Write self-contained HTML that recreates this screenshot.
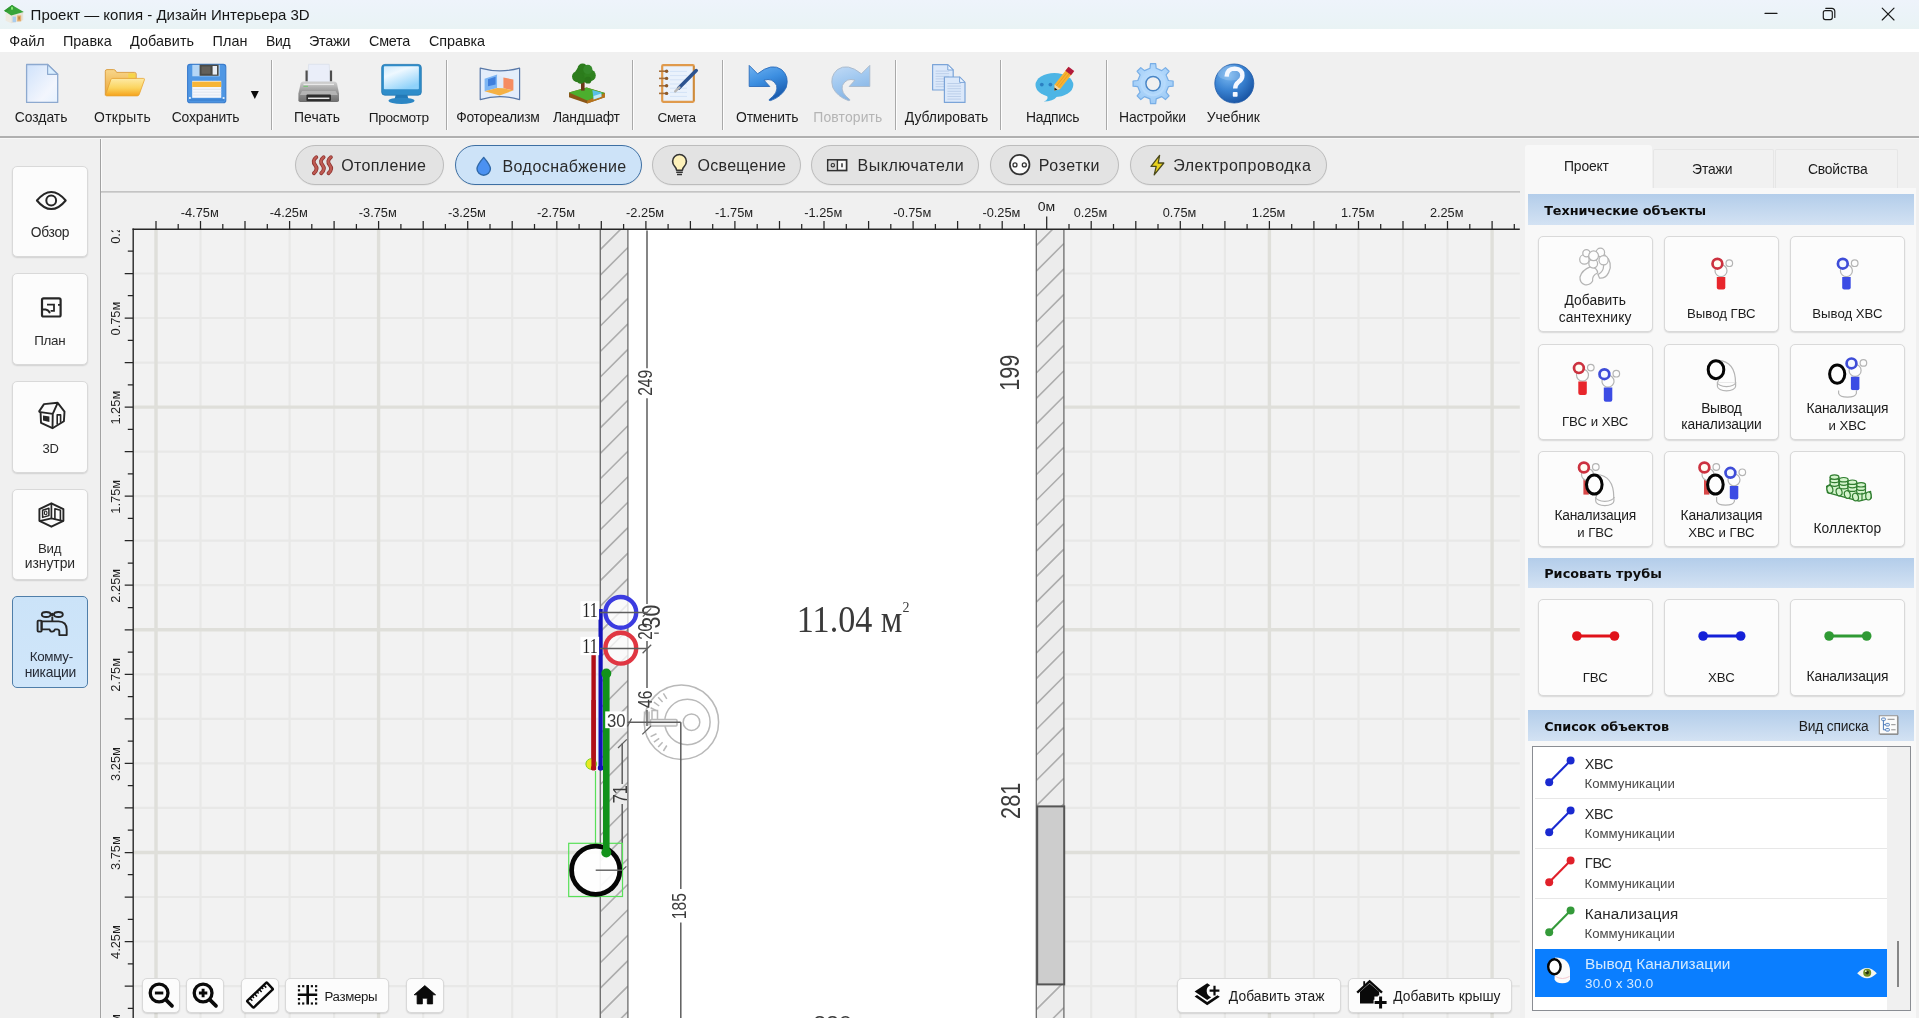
<!DOCTYPE html>
<html lang="ru"><head><meta charset="utf-8"><title>Проект — копия - Дизайн Интерьера 3D</title>
<style>
html,body{margin:0;padding:0;background:#f0f0f0;}
body{width:1919px;height:1018px;overflow:hidden;background:#f0f0f0;font-family:"Liberation Sans",sans-serif;position:relative;}
div,span.t,svg{position:absolute;box-sizing:border-box;}
span.t{white-space:nowrap;line-height:1;}
.btn{background:#fcfcfc;border:1px solid #d9d9d9;border-radius:5px;box-shadow:0 1px 1.5px rgba(0,0,0,0.13);}
.pill{background:#e3e3e3;border:1.7px solid #bcbcbc;border-radius:21px;box-shadow:0 0.5px 1px rgba(0,0,0,0.08);}
.pill.on{background:#cde3f8;border:1.7px solid #3d6fa3;}
.sep{width:2px;background:linear-gradient(90deg,#a9a9a9 0 1px,#fdfdfd 1px 2px);}
.hdr{background:linear-gradient(#b3cdea,#d3e2f3);}

#w{left:0;top:0;width:1919px;height:1018px;will-change:transform;}

</style></head>
<body>
<div id="w">
<div style="left:0px;top:0px;width:1919px;height:29px;background:linear-gradient(180deg,#eef3fb 0%,#ebf3f8 55%,#e9f3f4 100%);"></div>
<svg style="left:0;top:0" width="30" height="29" viewBox="0 0 30 29">
<polygon points="5.6,12.6 11.2,15.2 11.2,23.2 5.6,20.8" fill="#eeeae0"/>
<polygon points="11.2,15.2 23.2,12.2 23.2,20.2 11.2,23.2" fill="#e7e2d6"/>
<rect x="12.6" y="16.6" width="3.4" height="5.6" fill="#a9cdee"/>
<rect x="17.2" y="15.4" width="4" height="6" fill="#e5ac6a"/>
<rect x="18.4" y="16.6" width="1.4" height="3" fill="#b8803c"/>
<polygon points="4.1,10.7 12,5.1 23.8,12 11.2,15.6" fill="#38a43a"/>
<polygon points="4.1,10.7 12,5.1 14,6.4 6,12" fill="#2f9832"/>
<ellipse cx="12" cy="8.3" rx="1" ry="1.7" fill="#86ea72"/>
</svg>
<span class="t" style="left:30.60px;top:6.80px;font-size:15px;letter-spacing:0.003px;color:#151515;">Проект — копия - Дизайн Интерьера 3D</span>
<svg style="left:1750px;top:0" width="169" height="29" viewBox="0 0 169 29">
<g stroke="#1a1a1a" stroke-width="1.15" fill="none" stroke-linecap="round">
<line x1="15" y1="13.4" x2="27" y2="13.4"/>
<rect x="73.3" y="10.6" width="9" height="9" rx="2"/>
<path d="M75.8 8.4 h6.2 a2.8 2.8 0 0 1 2.8 2.8 v6.2"/>
<line x1="132.2" y1="8.2" x2="144" y2="20"/><line x1="144" y1="8.2" x2="132.2" y2="20"/>
</g></svg>
<div style="left:0px;top:29px;width:1919px;height:22.5px;background:#fff;"></div>
<span class="t" style="left:9.20px;top:34.21px;font-size:14.4px;letter-spacing:0.024px;color:#1a1a1a;">Файл</span>
<span class="t" style="left:63.00px;top:34.21px;font-size:14.4px;letter-spacing:0.010px;color:#1a1a1a;">Правка</span>
<span class="t" style="left:130.00px;top:34.21px;font-size:14.4px;letter-spacing:0.070px;color:#1a1a1a;">Добавить</span>
<span class="t" style="left:212.50px;top:34.21px;font-size:14.4px;letter-spacing:0.071px;color:#1a1a1a;">План</span>
<span class="t" style="left:266.00px;top:34.61px;font-size:13.93px;letter-spacing:-0.300px;color:#1a1a1a;">Вид</span>
<span class="t" style="left:309.00px;top:34.21px;font-size:14.4px;letter-spacing:-0.294px;color:#1a1a1a;">Этажи</span>
<span class="t" style="left:369.00px;top:34.21px;font-size:14.4px;letter-spacing:-0.255px;color:#1a1a1a;">Смета</span>
<span class="t" style="left:429.00px;top:34.21px;font-size:14.4px;letter-spacing:-0.070px;color:#1a1a1a;">Справка</span>
<div style="left:0px;top:51.5px;width:1919px;height:85px;background:#f0f0f0;"></div>
<div style="left:0px;top:136px;width:1919px;height:1.6px;background:#b0b0b0;"></div>
<div style="left:0px;top:137.6px;width:1919px;height:1.0px;background:#f8f8f8;"></div>
<div class="sep" style="left:271.2px;top:60px;width:2px;height:70px;"></div>
<div class="sep" style="left:445.5px;top:60px;width:2px;height:70px;"></div>
<div class="sep" style="left:632.2px;top:60px;width:2px;height:70px;"></div>
<div class="sep" style="left:722.2px;top:60px;width:2px;height:70px;"></div>
<div class="sep" style="left:894.5px;top:60px;width:2px;height:70px;"></div>
<div class="sep" style="left:999.5px;top:60px;width:2px;height:70px;"></div>
<div class="sep" style="left:1106.2px;top:60px;width:2px;height:70px;"></div>
<span class="t" style="left:14.70px;top:111.13px;font-size:13.9px;letter-spacing:-0.004px;color:#1c1c1c;">Создать</span>
<span class="t" style="left:94.00px;top:111.13px;font-size:13.9px;letter-spacing:0.344px;color:#1c1c1c;">Открыть</span>
<span class="t" style="left:171.70px;top:111.13px;font-size:13.9px;letter-spacing:-0.142px;color:#1c1c1c;">Сохранить</span>
<span class="t" style="left:294.00px;top:111.13px;font-size:13.9px;letter-spacing:0.077px;color:#1c1c1c;">Печать</span>
<span class="t" style="left:368.70px;top:111.31px;font-size:13.69px;letter-spacing:-0.303px;color:#1c1c1c;">Просмотр</span>
<span class="t" style="left:456.30px;top:111.19px;font-size:13.83px;letter-spacing:-0.299px;color:#1c1c1c;">Фотореализм</span>
<span class="t" style="left:553.00px;top:111.13px;font-size:13.9px;letter-spacing:-0.290px;color:#1c1c1c;">Ландшафт</span>
<span class="t" style="left:657.50px;top:111.42px;font-size:13.56px;letter-spacing:-0.301px;color:#1c1c1c;">Смета</span>
<span class="t" style="left:736.00px;top:111.13px;font-size:13.9px;letter-spacing:-0.152px;color:#1c1c1c;">Отменить</span>
<span class="t" style="left:813.30px;top:111.13px;font-size:13.9px;letter-spacing:0.150px;color:#b4b4b4;">Повторить</span>
<span class="t" style="left:904.70px;top:111.13px;font-size:13.9px;letter-spacing:-0.015px;color:#1c1c1c;">Дублировать</span>
<span class="t" style="left:1026.00px;top:111.15px;font-size:13.88px;letter-spacing:-0.298px;color:#1c1c1c;">Надпись</span>
<span class="t" style="left:1119.00px;top:111.13px;font-size:13.9px;letter-spacing:-0.129px;color:#1c1c1c;">Настройки</span>
<span class="t" style="left:1206.70px;top:111.13px;font-size:13.9px;letter-spacing:0.024px;color:#1c1c1c;">Учебник</span>
<svg style="left:250px;top:90px" width="10" height="10"><polygon points="0.8,1 8.8,1 4.8,9" fill="#0a0a0a"/></svg>
<svg style="left:0;top:0" width="1919" height="140" viewBox="0 0 1919 140"><defs>
<linearGradient id="gdoc" x1="0" y1="0" x2="1" y2="1"><stop offset="0" stop-color="#cfe2fb"/><stop offset="0.7" stop-color="#f3f6fd"/><stop offset="1" stop-color="#e6f2ff"/></linearGradient>
<linearGradient id="gfold" x1="0" y1="0" x2="0" y2="1"><stop offset="0" stop-color="#fdeaa6"/><stop offset="0.55" stop-color="#fbd45e"/><stop offset="1" stop-color="#f5a21c"/></linearGradient>
<linearGradient id="gfoldb" x1="0" y1="0" x2="0" y2="1"><stop offset="0" stop-color="#f8d68a"/><stop offset="1" stop-color="#eba534"/></linearGradient>
<linearGradient id="gprn" x1="0" y1="0" x2="0" y2="1"><stop offset="0" stop-color="#d2d2d2"/><stop offset="0.45" stop-color="#9c9c9c"/><stop offset="1" stop-color="#6e6e6e"/></linearGradient>
<linearGradient id="gscr" x1="0" y1="0" x2="0.6" y2="1"><stop offset="0" stop-color="#cfeafc"/><stop offset="0.35" stop-color="#eef8ff"/><stop offset="1" stop-color="#8fd2fa"/></linearGradient>
<linearGradient id="gundo" x1="0" y1="0" x2="0.4" y2="1"><stop offset="0" stop-color="#6fb3f2"/><stop offset="0.5" stop-color="#3c8ee0"/><stop offset="1" stop-color="#1a5db0"/></linearGradient>
<linearGradient id="gredo" x1="1" y1="0" x2="0.6" y2="1"><stop offset="0" stop-color="#c4dcf6"/><stop offset="0.5" stop-color="#a2c9f0"/><stop offset="1" stop-color="#86b4e4"/></linearGradient>
<radialGradient id="ghelp" cx="0.35" cy="0.28" r="0.8"><stop offset="0" stop-color="#7ab8f0"/><stop offset="0.5" stop-color="#3a83d2"/><stop offset="1" stop-color="#154f9e"/></radialGradient>
<radialGradient id="ggear" cx="0.5" cy="0.4" r="0.6"><stop offset="0" stop-color="#c2e2ff"/><stop offset="1" stop-color="#9ccaf6"/></radialGradient>
</defs><path d="M26.6 64.5H47.6L57.7 74.3V102.4H26.6Z" fill="url(#gdoc)" stroke="#8da9cf" stroke-width="1.3" stroke-linejoin="round"/><path d="M47.6 64.5V74.3H57.7Z" fill="#d9eeff" stroke="#8da9cf" stroke-width="1.2" stroke-linejoin="round"/><path d="M105.3 95.2V71.2Q105.3 69.6 107 69.6H113.6Q115 69.6 115.8 71L116.6 72.4H134.5Q136.2 72.4 136.2 74V78.6H112L105.3 95.2Z" fill="url(#gfoldb)" stroke="#d99a3a" stroke-width="0.9"/><rect x="128.3" y="73.4" width="7" height="4.6" fill="#f6d54a"/><path d="M112.6 78.4H143.4Q144.9 78.4 144.4 79.9L139.2 94.6Q138.7 95.9 137.2 95.9H106.6Q105.3 95.9 105.8 94.5L110.8 79.7Q111.3 78.4 112.6 78.4Z" fill="url(#gfold)" stroke="#e8a532" stroke-width="0.8"/><rect x="187.6" y="64.4" width="38.2" height="38.4" rx="2.6" fill="#4f97e4" stroke="#3a7ccc" stroke-width="1.1"/><rect x="192.3" y="64.9" width="27.4" height="11.4" fill="#b4d6f6"/><rect x="199.6" y="64.6" width="19" height="11.2" fill="#4a4a46"/><rect x="212.6" y="66" width="4.4" height="8.6" fill="#e9eef5"/><rect x="201.5" y="66.4" width="9" height="7.4" fill="#63605a"/><rect x="192.2" y="80.8" width="29" height="17" fill="#f4f6fb"/><rect x="192.2" y="81.6" width="29" height="5.4" fill="#f7b537"/><path d="M192.2 89.4H221.2M192.2 92.2H221.2M192.2 95H221.2" stroke="#dfe4ee" stroke-width="0.9"/><rect x="189.2" y="98.6" width="35" height="2.6" fill="#3f86d6"/><circle cx="189.9" cy="98" r="1.1" fill="#e4f0fc"/><circle cx="223.6" cy="98" r="1.1" fill="#e4f0fc"/><path d="M308.6 64.3H329.2L330.2 82H307.6Z" fill="#eaeef9" stroke="#d5dbe8" stroke-width="0.6"/><path d="M306.6 70.5V81.6M331 70.5V81.6" stroke="#4e4e4e" stroke-width="2.2"/><path d="M303.2 81.6H334.4Q336.4 81.6 337 83.6L339 93.6V100.2Q339 102 337.2 102H300.2Q298.4 102 298.4 100.2V93.6L300.6 83.6Q301.2 81.6 303.2 81.6Z" fill="url(#gprn)"/><path d="M303.5 84.4H334" stroke="#e8e8e8" stroke-width="1.3"/><path d="M303.4 86.4H308" stroke="#7cc47a" stroke-width="1.2"/><path d="M302 91H335.6L337.6 95H300Z" fill="#b4b4b4"/><rect x="306.4" y="94.6" width="24.6" height="6.4" rx="1" fill="#2e2e2e"/><path d="M308 98.3H329.4" stroke="#e8e8e8" stroke-width="1.5"/><rect x="381.7" y="64.4" width="39.6" height="30.8" rx="3.2" fill="#2f8dca" stroke="#2478b2" stroke-width="0.8"/><rect x="383.9" y="66.3" width="35" height="23" rx="0.8" fill="url(#gscr)"/><path d="M395.6 95H407.4L408.6 100H394.4Z" fill="#2379b6"/><ellipse cx="401.5" cy="100.8" rx="13" ry="3.1" fill="#2b86c4"/><path d="M480.2 68.2Q500 73.6 519.6 68.2V99.6Q500 93.8 480.2 99.6Z" fill="#e4eefb" stroke="#5878a8" stroke-width="1.2" stroke-linejoin="round"/><path d="M484.6 78.8L497.2 74.6V88L484.6 91.2Z" fill="#7db6f4"/><path d="M488 79.2L495.6 76.8V84.6L488 86.2Z" fill="#3f7fdc"/><path d="M497.2 74.6L503.4 77.4V88.2L497.2 88Z" fill="#dfeaf8"/><path d="M503.4 77.4L513.4 79.6V90.4L503.4 88.2Z" fill="#f58c62"/><path d="M484.6 91.2L497.2 88L503.4 88.2L513.4 90.4L499.6 95.4Z" fill="#f5b144"/><path d="M569 92.6L586.6 87.4L605 93L605 97.2L587.2 103.6L569 97.2Z" fill="#8a5618"/><path d="M587.2 100.4L605 93V97.2L587.2 103.6Z" fill="#b8741c"/><path d="M569 92.6L586.6 87.4L605 93L587.2 100.4Z" fill="#4cae2e"/><path d="M592.4 90L601.4 92.4V96.8L593.6 99.6Z" fill="#58c0e8"/><path d="M593.6 96L601.4 93.4V96.8L593.6 99.6Z" fill="#bfe8f6"/><rect x="581" y="80" width="3.6" height="10.6" fill="#6a3818"/><circle cx="583.6" cy="74" r="8.4" fill="#2c7c1c"/><circle cx="577.6" cy="76.6" r="5.6" fill="#2c7c1c"/><circle cx="590" cy="75.4" r="5.8" fill="#2f821f"/><circle cx="582.6" cy="68.6" r="5" fill="#2c7c1c"/><circle cx="587.8" cy="69.4" r="4.6" fill="#35892a"/><circle cx="580.6" cy="80.6" r="3.2" fill="#2c7c1c"/><circle cx="588" cy="80.2" r="3.4" fill="#2a761a"/><rect x="662.2" y="65.2" width="31.6" height="36.6" rx="1" fill="#eaf2fc" stroke="#e09a4c" stroke-width="2.2"/><path d="M693.8 66V101" stroke="#c98a3c" stroke-width="1.4"/><path d="M670 71.4H687M670 75.6H687M670 79.8H687M670 84H687M670 88.2H687M670 92.4H687M670 96.4H687" stroke="#d3e2f6" stroke-width="1"/><path d="M659 71.2H666" stroke="#a8703a" stroke-width="1.6"/><circle cx="666.6" cy="71.2" r="1.7" fill="#8e5a2a"/><path d="M659 78.4H666" stroke="#a8703a" stroke-width="1.6"/><circle cx="666.6" cy="78.4" r="1.7" fill="#8e5a2a"/><path d="M659 85.8H666" stroke="#a8703a" stroke-width="1.6"/><circle cx="666.6" cy="85.8" r="1.7" fill="#8e5a2a"/><path d="M659 93.4H666" stroke="#a8703a" stroke-width="1.6"/><circle cx="666.6" cy="93.4" r="1.7" fill="#8e5a2a"/><path d="M696.2 70.6L678.6 88.2" stroke="#2c5390" stroke-width="3.6" stroke-linecap="round"/><path d="M679.4 87.4L675.2 91.4" stroke="#b8b8b8" stroke-width="2.4" stroke-linecap="round"/><path d="M749.2 65.4L749.2 86.5L769.8 86.5L764 80.2Q772.5 77.4 776.6 85.4Q778.6 92.6 769.2 99.6Q768.6 100.7 770.6 100.6Q781.6 96.8 786.2 87.6Q789.6 76.6 781.6 69.6Q771.6 62.4 757.6 73.8Z" fill="url(#gundo)" stroke="#2c6cba" stroke-width="0.9" stroke-linejoin="round"/><g transform="translate(1619 0) scale(-1 1)"><path d="M749.2 65.4L749.2 86.5L769.8 86.5L764 80.2Q772.5 77.4 776.6 85.4Q778.6 92.6 769.2 99.6Q768.6 100.7 770.6 100.6Q781.6 96.8 786.2 87.6Q789.6 76.6 781.6 69.6Q771.6 62.4 757.6 73.8Z" fill="url(#gredo)" stroke="#a8b8ca" stroke-width="0.9" stroke-linejoin="round"/></g><path d="M932.6 64.6H947.8000000000001L953.2 70.0V90.0H932.6Z" fill="#dbe8fa" stroke="#7ba4d8" stroke-width="1.2" stroke-linejoin="round"/><path d="M947.8000000000001 64.6V70.0H953.2Z" fill="#eef6ff" stroke="#7ba4d8" stroke-width="1" stroke-linejoin="round"/><path d="M935.6 71.1H949.2M935.6 73.69999999999999H949.2M935.6 76.3H949.2M935.6 78.89999999999999H949.2M935.6 81.5H949.2M935.6 84.1H949.2M935.6 86.69999999999999H949.2" stroke="#b8cce8" stroke-width="0.9"/><path d="M944.4 77H959.6L965.0 82.4V102.4H944.4Z" fill="#dbe8fa" stroke="#7ba4d8" stroke-width="1.2" stroke-linejoin="round"/><path d="M959.6 77V82.4H965.0Z" fill="#eef6ff" stroke="#7ba4d8" stroke-width="1" stroke-linejoin="round"/><path d="M947.4 83.5H961.0M947.4 86.1H961.0M947.4 88.7H961.0M947.4 91.3H961.0M947.4 93.9H961.0M947.4 96.5H961.0M947.4 99.1H961.0" stroke="#b8cce8" stroke-width="0.9"/><path d="M1046.6 94.8Q1049.6 99.6 1043.6 101.6Q1053 101.6 1057.4 96.2Z" fill="#4db5e5"/><ellipse cx="1054.4" cy="85" rx="18.9" ry="12" fill="#4db5e5"/><circle cx="1041.8" cy="84.6" r="1.9" fill="#2b80c2"/><circle cx="1050.4" cy="84.6" r="1.9" fill="#2b80c2"/><g transform="translate(1054.4 90.6) rotate(-52)"><path d="M0 0L5 -3.6H26.6V3.6H5Z" fill="#f7b232"/><path d="M0 0L5 -3.6V3.6Z" fill="#f1d7a8"/><path d="M0 0L2.6 -1.9V1.9Z" fill="#161616"/><path d="M22.4 -3.6H27.6V3.6H22.4Z" fill="#b21a3c"/><path d="M5 -1.2H22.4M5 1.2H22.4" stroke="#e89a1c" stroke-width="0.7"/></g><path d="M1150.00 68.31L1150.52 63.57L1155.68 63.57L1156.20 68.31L1161.72 70.60L1165.44 67.61L1169.09 71.26L1166.10 74.98L1168.39 80.50L1173.13 81.02L1173.13 86.18L1168.39 86.70L1166.10 92.22L1169.09 95.94L1165.44 99.59L1161.72 96.60L1156.20 98.89L1155.68 103.63L1150.52 103.63L1150.00 98.89L1144.48 96.60L1140.76 99.59L1137.11 95.94L1140.10 92.22L1137.81 86.70L1133.07 86.18L1133.07 81.02L1137.81 80.50L1140.10 74.98L1137.11 71.26L1140.76 67.61L1144.48 70.60Z" fill="url(#ggear)" stroke="#78aee6" stroke-width="1.2" stroke-linejoin="round"/><circle cx="1153.1" cy="83.6" r="11.6" fill="none" stroke="#b6dafc" stroke-width="2"/><circle cx="1153.1" cy="83.6" r="7.2" fill="#f0f0f0" stroke="#4a86c6" stroke-width="1.5"/><circle cx="1234.3" cy="83.5" r="19.5" fill="url(#ghelp)" stroke="#1f5aa8" stroke-width="0.8"/><ellipse cx="1231" cy="73" rx="13.5" ry="7.6" fill="#ffffff" fill-opacity="0.16"/><path d="M1226.6 76.6Q1227 68.6 1234.6 68.6Q1242.4 68.8 1242.4 75.4Q1242.4 79.4 1238.2 82.2Q1235.2 84.4 1235.2 88.6" fill="none" stroke="#f4f8ff" stroke-width="4.4"/><rect x="1232.8" y="92" width="4.8" height="4.8" rx="0.8" fill="#f4f8ff"/></svg>
<div style="left:100px;top:138.5px;width:1.1px;height:880px;background:#a2a2a2;"></div>
<div style="left:101.1px;top:138.5px;width:1px;height:880px;background:#fbfbfb;"></div>
<div class="btn" style="left:11.8px;top:165.5px;width:76.5px;height:91.5px;"></div>
<div class="btn" style="left:11.8px;top:273.4px;width:76.5px;height:91.5px;"></div>
<div class="btn" style="left:11.8px;top:381px;width:76.5px;height:91.5px;"></div>
<div class="btn" style="left:11.8px;top:488.6px;width:76.5px;height:91.5px;"></div>
<div class="btn" style="left:11.8px;top:596.2px;width:76.5px;height:91.5px;background:linear-gradient(#cbe3f8,#d0e6fa);border:1.7px solid #4f7ea9;box-shadow:none;"></div>
<svg style="left:0;top:0" width="101" height="1018" viewBox="0 0 101 1018"><g fill="none" stroke="#262626" stroke-width="2"><path d="M36.9 200.5Q44 191.9 51.3 191.9Q58.6 191.9 65.7 200.5Q58.6 209.1 51.3 209.1Q44 209.1 36.9 200.5Z" stroke-linejoin="round"/><circle cx="51.2" cy="200.5" r="4.9"/></g><g fill="none" stroke="#262626"><rect x="42" y="298.3" width="18.6" height="18.2" rx="1.6" stroke-width="2.2"/><path d="M42 309.5H45.6Q48.6 309.8 49.9 313.2M47 304.7H54V310.8H50.6M58 304.9H60.6" stroke-width="1.8"/></g><g fill="none" stroke="#262626" stroke-width="1.9" stroke-linejoin="round"><path d="M38.8 411.9L44 404.1L57.7 402.8L64.5 411.6L63.9 421.3L52.5 428.2L41 422.8L40.6 412.6"/><path d="M38.8 411.9L52.75 413.9L57.7 402.8M52.75 413.9L52.5 428.2"/><path d="M57.2 424.6V414.9H60.6V422.8" stroke-width="1.6"/></g><path d="M43 415.5L49.4 416.5V421.9L43 420.5Z" fill="#262626"/><g fill="none" stroke="#262626" stroke-width="1.9" stroke-linejoin="round"><path d="M51.4 503.3L63.4 509.2V520.8L51.4 526.7L39.4 520.8V509.2Z"/><path d="M51.4 503.3V518.4M39.4 521.2L51.4 518.4L63.4 521.2" stroke-width="1.7"/><path d="M42.6 510.2L48.9 508.2V515.6L42.6 517.4Z" stroke-width="1.5"/><path d="M54.9 518.9V508.7L60.4 510.3V520.3" stroke-width="1.6"/></g><ellipse cx="45.7" cy="512.9" rx="1.3" ry="1.9" fill="none" stroke="#262626" stroke-width="1.1"/><g fill="none" stroke="#262626" stroke-width="1.9" stroke-linejoin="round"><ellipse cx="46.2" cy="614.5" rx="4.4" ry="2.5"/><ellipse cx="58.4" cy="614.5" rx="4.4" ry="2.5"/><path d="M52.3 616.5V621"/><path d="M41.6 621.4H58.6Q66.6 621.6 66.7 629.5V635.1H59.3V631.2Q59.1 629.4 57.2 629.4H55Q54.2 631.6 52.2 631.6Q50.2 631.6 49.6 629.4H41.6Z"/><rect x="37.6" y="620.6" width="4" height="11" rx="0.8"/></g><circle cx="52.3" cy="614.5" r="1.7" fill="#262626"/></svg>
<span class="t" style="left:30.80px;top:226.11px;font-size:13.81px;letter-spacing:-0.297px;color:#2a2a2a;">Обзор</span>
<span class="t" style="left:34.20px;top:334.06px;font-size:13.4px;letter-spacing:-0.301px;color:#2a2a2a;">План</span>
<span class="t" style="left:42.60px;top:441.90px;font-size:12.99px;letter-spacing:-0.303px;color:#2a2a2a;">3D</span>
<span class="t" style="left:38.00px;top:541.67px;font-size:13.27px;letter-spacing:-0.302px;color:#2a2a2a;">Вид</span>
<span class="t" style="left:24.70px;top:557.33px;font-size:13.9px;letter-spacing:-0.032px;color:#2a2a2a;">изнутри</span>
<span class="t" style="left:29.70px;top:650.06px;font-size:13.4px;letter-spacing:-0.299px;color:#262b36;">Комму-</span>
<span class="t" style="left:24.70px;top:665.83px;font-size:13.9px;letter-spacing:-0.250px;color:#262b36;">никации</span>
<div style="left:101.2px;top:190.9px;width:1418.5px;height:1.7px;background:#c4c4c4;"></div>
<div class="pill" style="left:294.7px;top:144.8px;width:149.6px;height:40.3px;"></div>
<span class="t" style="left:341.30px;top:158.36px;font-size:16px;letter-spacing:0.326px;color:#2a2a2a;">Отопление</span>
<div class="pill on" style="left:454.7px;top:144.8px;width:187.30000000000004px;height:40.3px;"></div>
<span class="t" style="left:502.50px;top:159.36px;font-size:16px;letter-spacing:0.442px;color:#2a2a2a;">Водоснабжение</span>
<div class="pill" style="left:652.2px;top:144.8px;width:148.89999999999995px;height:40.3px;"></div>
<span class="t" style="left:697.50px;top:158.36px;font-size:16px;letter-spacing:0.287px;color:#2a2a2a;">Освещение</span>
<div class="pill" style="left:811.4000000000001px;top:144.8px;width:167.6px;height:40.3px;"></div>
<span class="t" style="left:857.50px;top:158.36px;font-size:16px;letter-spacing:0.517px;color:#2a2a2a;">Выключатели</span>
<div class="pill" style="left:989.7px;top:144.8px;width:129.6px;height:40.3px;"></div>
<span class="t" style="left:1038.80px;top:158.36px;font-size:16px;letter-spacing:0.532px;color:#2a2a2a;">Розетки</span>
<div class="pill" style="left:1129.7px;top:144.8px;width:196.89999999999995px;height:40.3px;"></div>
<span class="t" style="left:1173.30px;top:158.36px;font-size:16px;letter-spacing:0.505px;color:#2a2a2a;">Электропроводка</span>
<svg style="left:0;top:140px" width="1919" height="50" viewBox="0 140 1919 50"><path d="M316.3 157.2Q311.70000000000005 160.8 315.1 165Q318.5 169.2 313.90000000000003 173.2" fill="none" stroke="#8e3430" stroke-width="3.8" stroke-linecap="round"/><path d="M316.3 157.2Q311.70000000000005 160.8 315.1 165Q318.5 169.2 313.90000000000003 173.2" fill="none" stroke="#bf5a52" stroke-width="2.2" stroke-linecap="round"/><path d="M323.59999999999997 157.2Q319.0 160.8 322.4 165Q325.79999999999995 169.2 321.2 173.2" fill="none" stroke="#8e3430" stroke-width="3.8" stroke-linecap="round"/><path d="M323.59999999999997 157.2Q319.0 160.8 322.4 165Q325.79999999999995 169.2 321.2 173.2" fill="none" stroke="#bf5a52" stroke-width="2.2" stroke-linecap="round"/><path d="M330.9 157.2Q326.3 160.8 329.7 165Q333.09999999999997 169.2 328.5 173.2" fill="none" stroke="#8e3430" stroke-width="3.8" stroke-linecap="round"/><path d="M330.9 157.2Q326.3 160.8 329.7 165Q333.09999999999997 169.2 328.5 173.2" fill="none" stroke="#bf5a52" stroke-width="2.2" stroke-linecap="round"/><path d="M483.7 157.4Q490.4 165.2 490.4 168.8A6.7 6.4 0 0 1 477 168.8Q477 165.2 483.7 157.4Z" fill="#4b91f1" stroke="#2f68a8" stroke-width="1.4" stroke-linejoin="round"/><path d="M676.6 170.2Q676.4 168 674.6 166.2A6.9 6.9 0 1 1 684.4 166.2Q682.6 168 682.4 170.2Z" fill="#fdf1ba" stroke="#343434" stroke-width="1.6" stroke-linejoin="round"/><path d="M676.2 172.2H682.8M677 174.6H682" stroke="#343434" stroke-width="1.5"/><rect x="827.8" y="159.9" width="18.8" height="10.6" fill="#fafafa" stroke="#303030" stroke-width="1.7"/><rect x="828.6" y="160.7" width="8.6" height="9" fill="#d6d6d6"/><path d="M837.4 160V170.4" stroke="#303030" stroke-width="1.4"/><circle cx="832.8" cy="165.2" r="1.7" fill="none" stroke="#303030" stroke-width="1.1"/><path d="M842 163.2V167.2" stroke="#303030" stroke-width="1.5"/><circle cx="1019.7" cy="164.6" r="9.8" fill="#fbfbfb" stroke="#333" stroke-width="1.7"/><circle cx="1015" cy="164.9" r="2" fill="none" stroke="#333" stroke-width="1.3"/><circle cx="1024.3" cy="164.9" r="2" fill="none" stroke="#333" stroke-width="1.3"/><path d="M1159.6 155.3L1151 166.4H1156.2L1154.2 174.8L1163.8 163H1158.2Z" fill="#e9d21e" stroke="#4c4a1c" stroke-width="1.3" stroke-linejoin="round"/></svg>
<svg style="left:0;top:0" width="1919" height="1018" viewBox="0 0 1919 1018" font-family="'Liberation Sans',sans-serif"><rect x="101.2" y="192.7" width="1418.6" height="825.3" fill="#f0f0f0"/>
<rect x="134.0" y="230.0" width="1385.8" height="788.0" fill="#f2f2f2"/>
<path d="M200.5 230.0V1018M245.0 230.0V1018M289.6 230.0V1018M334.1 230.0V1018M423.2 230.0V1018M467.7 230.0V1018M512.2 230.0V1018M556.8 230.0V1018M645.9 230.0V1018M690.4 230.0V1018M734.9 230.0V1018M779.5 230.0V1018M868.6 230.0V1018M913.1 230.0V1018M957.6 230.0V1018M1002.2 230.0V1018M1091.2 230.0V1018M1135.8 230.0V1018M1180.3 230.0V1018M1224.9 230.0V1018M1313.9 230.0V1018M1358.5 230.0V1018M1403.0 230.0V1018M1447.5 230.0V1018M134.0 273.5H1519.8M134.0 318.0H1519.8M134.0 362.6H1519.8M134.0 451.6H1519.8M134.0 496.2H1519.8M134.0 540.7H1519.8M134.0 585.2H1519.8M134.0 674.3H1519.8M134.0 718.9H1519.8M134.0 763.4H1519.8M134.0 807.9H1519.8M134.0 897.0H1519.8M134.0 941.5H1519.8M134.0 986.1H1519.8" stroke="#e8e8e7" stroke-width="2.2" fill="none"/>
<path d="M156.0 230.0V1018M378.6 230.0V1018M601.3 230.0V1018M824.0 230.0V1018M1046.7 230.0V1018M1269.4 230.0V1018M1492.1 230.0V1018M134.0 407.1H1519.8M134.0 629.8H1519.8M134.0 852.5H1519.8" stroke="#dfdfda" stroke-width="3.4" fill="none"/>
<rect x="627.9" y="230.0" width="408.4" height="788.0" fill="#ffffff"/>
<defs><clipPath id="cw1"><rect x="600.3" y="230.0" width="27.600000000000023" height="788.0"/></clipPath><clipPath id="cw2"><rect x="1036.3" y="230.0" width="27.600000000000136" height="788.0"/></clipPath></defs>
<rect x="600.3" y="230.0" width="27.600000000000023" height="788.0" fill="#ececec"/>
<path d="M600.3 198.7L627.9 171.1M600.3 224.1L627.9 196.5M600.3 249.6L627.9 222.0M600.3 275.1L627.9 247.5M600.3 300.5L627.9 272.9M600.3 326.0L627.9 298.4M600.3 351.5L627.9 323.9M600.3 377.0L627.9 349.4M600.3 402.4L627.9 374.8M600.3 427.9L627.9 400.3M600.3 453.4L627.9 425.8M600.3 478.8L627.9 451.2M600.3 504.3L627.9 476.7M600.3 529.8L627.9 502.2M600.3 555.2L627.9 527.6M600.3 580.7L627.9 553.1M600.3 606.2L627.9 578.6M600.3 631.7L627.9 604.1M600.3 657.1L627.9 629.5M600.3 682.6L627.9 655.0M600.3 708.1L627.9 680.5M600.3 733.5L627.9 705.9M600.3 759.0L627.9 731.4M600.3 784.5L627.9 756.9M600.3 809.9L627.9 782.3M600.3 835.4L627.9 807.8M600.3 860.9L627.9 833.3M600.3 886.4L627.9 858.8M600.3 911.8L627.9 884.2M600.3 937.3L627.9 909.7M600.3 962.8L627.9 935.2M600.3 988.2L627.9 960.6M600.3 1013.7L627.9 986.1M600.3 1039.2L627.9 1011.6" stroke="#adadad" stroke-width="1.6" fill="none" clip-path="url(#cw1)"/>
<path d="M600.3 230.0V1018M627.9 230.0V1018" stroke="#6c6c6c" stroke-width="1.3" fill="none"/>
<rect x="1036.3" y="230.0" width="27.600000000000136" height="788.0" fill="#ececec"/>
<path d="M1036.3 194.7L1063.9 167.1M1036.3 220.1L1063.9 192.5M1036.3 245.6L1063.9 218.0M1036.3 271.1L1063.9 243.5M1036.3 296.5L1063.9 268.9M1036.3 322.0L1063.9 294.4M1036.3 347.5L1063.9 319.9M1036.3 373.0L1063.9 345.3M1036.3 398.4L1063.9 370.8M1036.3 423.9L1063.9 396.3M1036.3 449.4L1063.9 421.8M1036.3 474.8L1063.9 447.2M1036.3 500.3L1063.9 472.7M1036.3 525.8L1063.9 498.2M1036.3 551.2L1063.9 523.6M1036.3 576.7L1063.9 549.1M1036.3 602.2L1063.9 574.6M1036.3 627.7L1063.9 600.1M1036.3 653.1L1063.9 625.5M1036.3 678.6L1063.9 651.0M1036.3 704.1L1063.9 676.5M1036.3 729.5L1063.9 701.9M1036.3 755.0L1063.9 727.4M1036.3 780.5L1063.9 752.9M1036.3 805.9L1063.9 778.3M1036.3 831.4L1063.9 803.8M1036.3 856.9L1063.9 829.3M1036.3 882.4L1063.9 854.8M1036.3 907.8L1063.9 880.2M1036.3 933.3L1063.9 905.7M1036.3 958.8L1063.9 931.2M1036.3 984.2L1063.9 956.6M1036.3 1009.7L1063.9 982.1M1036.3 1035.2L1063.9 1007.6" stroke="#adadad" stroke-width="1.6" fill="none" clip-path="url(#cw2)"/>
<path d="M1036.3 230.0V1018M1063.9 230.0V1018" stroke="#6c6c6c" stroke-width="1.3" fill="none"/>
<rect x="1037.2" y="806.4" width="27" height="178" fill="#cdcdcd" stroke="#555" stroke-width="2"/>
<path d="M132.5 229.2H1519.8" stroke="#262626" stroke-width="1.4"/>
<path d="M133.2 228.4V1018" stroke="#262626" stroke-width="1.4"/>
<path d="M156.0 229V221M178.2 229V224M200.5 229V221M222.8 229V224M245.0 229V221M267.3 229V224M289.6 229V221M311.8 229V224M334.1 229V221M356.4 229V224M378.6 229V221M400.9 229V224M423.2 229V221M445.4 229V224M467.7 229V221M490.0 229V224M512.2 229V221M534.5 229V224M556.8 229V221M579.1 229V224M601.3 229V221M623.6 229V224M645.9 229V221M668.1 229V224M690.4 229V221M712.7 229V224M734.9 229V221M757.2 229V224M779.5 229V221M801.7 229V224M824.0 229V221M846.3 229V224M868.6 229V221M890.8 229V224M913.1 229V221M935.4 229V224M957.6 229V221M979.9 229V224M1002.2 229V221M1024.4 229V224M1046.7 229V216.5M1069.0 229V224M1091.2 229V221M1113.5 229V224M1135.8 229V221M1158.0 229V224M1180.3 229V221M1202.6 229V224M1224.9 229V221M1247.1 229V224M1269.4 229V221M1291.7 229V224M1313.9 229V221M1336.2 229V224M1358.5 229V221M1380.7 229V224M1403.0 229V221M1425.3 229V224M1447.5 229V221M1469.8 229V224M1492.1 229V221M1514.3 229V224M133 251.2H127.8M133 273.5H124.7M133 295.7H127.8M133 318.0H124.7M133 340.3H127.8M133 362.6H124.7M133 384.8H127.8M133 407.1H124.7M133 429.4H127.8M133 451.6H124.7M133 473.9H127.8M133 496.2H124.7M133 518.4H127.8M133 540.7H124.7M133 563.0H127.8M133 585.2H124.7M133 607.5H127.8M133 629.8H124.7M133 652.0H127.8M133 674.3H124.7M133 696.6H127.8M133 718.9H124.7M133 741.1H127.8M133 763.4H124.7M133 785.7H127.8M133 807.9H124.7M133 830.2H127.8M133 852.5H124.7M133 874.7H127.8M133 897.0H124.7M133 919.3H127.8M133 941.5H124.7M133 963.8H127.8M133 986.1H124.7M133 1008.3H127.8" stroke="#262626" stroke-width="1.25" fill="none"/>
<text x="199.7" y="217.1" font-size="13.2" text-anchor="middle" fill="#1e1e1e" textLength="38" lengthAdjust="spacingAndGlyphs">-4.75м</text>
<text x="288.8" y="217.1" font-size="13.2" text-anchor="middle" fill="#1e1e1e" textLength="38" lengthAdjust="spacingAndGlyphs">-4.25м</text>
<text x="377.8" y="217.1" font-size="13.2" text-anchor="middle" fill="#1e1e1e" textLength="38" lengthAdjust="spacingAndGlyphs">-3.75м</text>
<text x="466.9" y="217.1" font-size="13.2" text-anchor="middle" fill="#1e1e1e" textLength="38" lengthAdjust="spacingAndGlyphs">-3.25м</text>
<text x="556.0" y="217.1" font-size="13.2" text-anchor="middle" fill="#1e1e1e" textLength="38" lengthAdjust="spacingAndGlyphs">-2.75м</text>
<text x="645.1" y="217.1" font-size="13.2" text-anchor="middle" fill="#1e1e1e" textLength="38" lengthAdjust="spacingAndGlyphs">-2.25м</text>
<text x="734.1" y="217.1" font-size="13.2" text-anchor="middle" fill="#1e1e1e" textLength="38" lengthAdjust="spacingAndGlyphs">-1.75м</text>
<text x="823.2" y="217.1" font-size="13.2" text-anchor="middle" fill="#1e1e1e" textLength="38" lengthAdjust="spacingAndGlyphs">-1.25м</text>
<text x="912.3" y="217.1" font-size="13.2" text-anchor="middle" fill="#1e1e1e" textLength="38" lengthAdjust="spacingAndGlyphs">-0.75м</text>
<text x="1001.4" y="217.1" font-size="13.2" text-anchor="middle" fill="#1e1e1e" textLength="38" lengthAdjust="spacingAndGlyphs">-0.25м</text>
<text x="1090.4" y="217.1" font-size="13.2" text-anchor="middle" fill="#1e1e1e" textLength="33.5" lengthAdjust="spacingAndGlyphs">0.25м</text>
<text x="1179.5" y="217.1" font-size="13.2" text-anchor="middle" fill="#1e1e1e" textLength="33.5" lengthAdjust="spacingAndGlyphs">0.75м</text>
<text x="1268.6" y="217.1" font-size="13.2" text-anchor="middle" fill="#1e1e1e" textLength="33.5" lengthAdjust="spacingAndGlyphs">1.25м</text>
<text x="1357.7" y="217.1" font-size="13.2" text-anchor="middle" fill="#1e1e1e" textLength="33.5" lengthAdjust="spacingAndGlyphs">1.75м</text>
<text x="1446.7" y="217.1" font-size="13.2" text-anchor="middle" fill="#1e1e1e" textLength="33.5" lengthAdjust="spacingAndGlyphs">2.25м</text>
<text x="1046.5" y="211.3" font-size="13.2" text-anchor="middle" fill="#1e1e1e" textLength="17.5" lengthAdjust="spacingAndGlyphs">0м</text>
<clipPath id="crv"><rect x="101.2" y="230.3" width="33" height="788"/></clipPath>
<g clip-path="url(#crv)">
<text transform="translate(120.3 226.9) rotate(-90)" font-size="13.2" text-anchor="middle" fill="#1e1e1e" textLength="33.8" lengthAdjust="spacingAndGlyphs">0.25м</text>
<text transform="translate(120.3 318.6) rotate(-90)" font-size="13.2" text-anchor="middle" fill="#1e1e1e" textLength="33.8" lengthAdjust="spacingAndGlyphs">0.75м</text>
<text transform="translate(120.3 407.7) rotate(-90)" font-size="13.2" text-anchor="middle" fill="#1e1e1e" textLength="33.8" lengthAdjust="spacingAndGlyphs">1.25м</text>
<text transform="translate(120.3 496.8) rotate(-90)" font-size="13.2" text-anchor="middle" fill="#1e1e1e" textLength="33.8" lengthAdjust="spacingAndGlyphs">1.75м</text>
<text transform="translate(120.3 585.8) rotate(-90)" font-size="13.2" text-anchor="middle" fill="#1e1e1e" textLength="33.8" lengthAdjust="spacingAndGlyphs">2.25м</text>
<text transform="translate(120.3 674.9) rotate(-90)" font-size="13.2" text-anchor="middle" fill="#1e1e1e" textLength="33.8" lengthAdjust="spacingAndGlyphs">2.75м</text>
<text transform="translate(120.3 764.0) rotate(-90)" font-size="13.2" text-anchor="middle" fill="#1e1e1e" textLength="33.8" lengthAdjust="spacingAndGlyphs">3.25м</text>
<text transform="translate(120.3 853.1) rotate(-90)" font-size="13.2" text-anchor="middle" fill="#1e1e1e" textLength="33.8" lengthAdjust="spacingAndGlyphs">3.75м</text>
<text transform="translate(120.3 942.1) rotate(-90)" font-size="13.2" text-anchor="middle" fill="#1e1e1e" textLength="33.8" lengthAdjust="spacingAndGlyphs">4.25м</text>
<text transform="translate(120.3 1031.2) rotate(-90)" font-size="13.2" text-anchor="middle" fill="#1e1e1e" textLength="33.8" lengthAdjust="spacingAndGlyphs">4.75м</text>
<text transform="translate(120.3 1120.3) rotate(-90)" font-size="13.2" text-anchor="middle" fill="#1e1e1e" textLength="33.8" lengthAdjust="spacingAndGlyphs">5.25м</text>
<text transform="translate(120.3 1209.4) rotate(-90)" font-size="13.2" text-anchor="middle" fill="#1e1e1e" textLength="33.8" lengthAdjust="spacingAndGlyphs">5.75м</text>
</g>
<g fill="none" stroke="#b9b9b9" stroke-width="1.5">
<circle cx="681.4" cy="722.2" r="37.2"/><circle cx="687.4" cy="722" r="22.7"/><circle cx="691.5" cy="722.2" r="8.3"/>
<path d="M656.5 733.8L650.6 736.6M659.2 738.4L653.9 742.2M662.6 742.3L658.2 747.1M666.8 745.5L663.4 751.0M666.8 698.9L663.4 693.4M662.6 702.1L658.2 697.3M659.2 706.0L653.9 702.2M656.5 710.6L650.6 707.8"/>
<rect x="650.5" y="719.4" width="26.5" height="6.6" rx="1" fill="#f4f4f4"/>
<path d="M644.5 711.5v14M649 711.5v14M652 719v-8.5h5.5v8.5"/>
</g>
<path d="M647 230.5V368.3M647 398.3V605M647 641V688M647 710V726M680.8 722.3V889M680.8 922.5V1018M627.6 722.3H680.8M622.2 743.5V784M622.2 804V870" stroke="#5e5e5e" stroke-width="1.5" fill="none"/>
<path d="M642.3 734.4L651 726M642.6 653.2L651.2 644.8M618 748L626.8 739.4M627.4 726.5L631.6 718.5M617.8 874.6L626.4 866.4" stroke="#5e5e5e" stroke-width="1.3" fill="none"/>
<text transform="translate(652.12 382.80) rotate(-90)" font-size="21" text-anchor="middle" fill="#3c3c3c" textLength="26" lengthAdjust="spacingAndGlyphs">249</text>
<text transform="translate(1018.97 372.70) rotate(-90)" font-size="27" text-anchor="middle" fill="#3c3c3c" textLength="36.2" lengthAdjust="spacingAndGlyphs">199</text>
<text transform="translate(1019.67 800.80) rotate(-90)" font-size="27" text-anchor="middle" fill="#3c3c3c" textLength="36.2" lengthAdjust="spacingAndGlyphs">281</text>
<text transform="translate(686.32 906.20) rotate(-90)" font-size="21" text-anchor="middle" fill="#3c3c3c" textLength="26" lengthAdjust="spacingAndGlyphs">185</text>
<text transform="translate(627.34 794.20) rotate(-90)" font-size="20.5" text-anchor="middle" fill="#3c3c3c" textLength="18" lengthAdjust="spacingAndGlyphs">71</text>
<text transform="translate(652.16 699.30) rotate(-90)" font-size="20" text-anchor="middle" fill="#3c3c3c" textLength="17.3" lengthAdjust="spacingAndGlyphs">46</text>
<rect x="641" y="604" width="19.5" height="25.5" fill="#fff"/><rect x="637" y="622.5" width="15.5" height="18.5" fill="#fff"/>
<text transform="translate(659.55 616.60) rotate(-90)" font-size="25" text-anchor="middle" fill="#3c3c3c" textLength="23.7" lengthAdjust="spacingAndGlyphs">30</text>
<text transform="translate(651.56 631.40) rotate(-90)" font-size="20" text-anchor="middle" fill="#3c3c3c" textLength="16.8" lengthAdjust="spacingAndGlyphs">20</text>
<path d="M642.8 616.6L651.2 608.4" stroke="#5e5e5e" stroke-width="1.3"/>
<path d="M654.2 633.2H658.8" stroke="#5e5e5e" stroke-width="1.4"/>
<text x="832.5" y="1029.5" font-size="21" text-anchor="middle" fill="#3c3c3c" textLength="38.5" lengthAdjust="spacingAndGlyphs">220</text>
<text x="796.8" y="632.4" font-family="'Liberation Serif',serif" font-size="37" fill="#3a3a3a" textLength="105.6" lengthAdjust="spacingAndGlyphs">11.04 м</text>
<text x="902.4" y="611.8" font-family="'Liberation Serif',serif" font-size="14" fill="#3a3a3a">2</text>
<rect x="591.4" y="654.5" width="4.4" height="115" fill="#b01018"/>
<path d="M600.6 609V770" stroke="#1212b8" stroke-width="4.2"/>
<circle cx="591.2" cy="764" r="5.3" fill="#e8e820" stroke="#7ed321" stroke-width="1"/>
<rect x="591.4" y="700" width="4.4" height="70" fill="#b01018"/>
<circle cx="593.6" cy="768" r="2.6" fill="#b01018"/>
<circle cx="600.6" cy="768" r="2.8" fill="#1212b8"/>
<path d="M595.5 771V843.5" stroke="#58e058" stroke-width="1.2"/>
<rect x="568.7" y="843.3" width="53.8" height="53.2" fill="none" stroke="#58e058" stroke-width="1.2"/>
<circle cx="595.7" cy="870.2" r="24.1" fill="#ffffff" fill-opacity="0.92" stroke="#050505" stroke-width="4.8"/>
<path d="M595.7 870.2H622" stroke="#5e5e5e" stroke-width="1.4"/>
<path d="M606.3 673.5V852.5" stroke="#12921a" stroke-width="6.6"/>
<circle cx="606.3" cy="673.5" r="5" fill="#12921a"/><circle cx="606.3" cy="852.5" r="5" fill="#12921a"/>
<circle cx="620.8" cy="612.4" r="15.4" fill="#ffffff" fill-opacity="0.75" stroke="#3c3ce0" stroke-width="4.4"/>
<circle cx="620.8" cy="648.2" r="15.4" fill="#ffffff" fill-opacity="0.75" stroke="#e03642" stroke-width="4.4"/>
<path d="M600 612.5H647.5M600 648.5H647.3" stroke="#5e5e5e" stroke-width="1.4"/>
<rect x="580.5" y="601.2" width="18.6" height="18.4" fill="#ffffff"/>
<text x="582.2" y="617.0" font-family="'Liberation Serif',serif" font-size="20.5" fill="#222" textLength="15.5" lengthAdjust="spacingAndGlyphs">11</text>
<rect x="580.5" y="636.8000000000001" width="18.6" height="18.4" fill="#ffffff"/>
<text x="582.2" y="652.6" font-family="'Liberation Serif',serif" font-size="20.5" fill="#222" textLength="15.5" lengthAdjust="spacingAndGlyphs">11</text>
<rect x="605.2" y="711.4" width="21" height="16.8" fill="#ffffff"/>
<text x="607" y="727" font-size="18.3" fill="#3c3c3c" textLength="18.6" lengthAdjust="spacingAndGlyphs">30</text></svg>
<div class="btn" style="left:142.2px;top:978px;width:38.0px;height:34.8px;"></div>
<div class="btn" style="left:185.9px;top:978px;width:38.400000000000006px;height:34.8px;"></div>
<div class="btn" style="left:240.7px;top:978px;width:38.5px;height:34.8px;"></div>
<div class="btn" style="left:284.8px;top:978px;width:104.59999999999997px;height:34.8px;"></div>
<div class="btn" style="left:405.6px;top:978px;width:38.19999999999999px;height:34.8px;"></div>
<div class="btn" style="left:1176.8px;top:978px;width:164.5px;height:34.8px;"></div>
<div class="btn" style="left:1347.6px;top:978px;width:164.20000000000005px;height:34.8px;"></div>
<svg style="left:0;top:0" width="1919" height="1018" viewBox="0 0 1919 1018"><g transform="translate(159.1 993)"><circle r="8.9" fill="none" stroke="#0a0a0a" stroke-width="3.3"/><path d="M6.9 6.9L12.9 12.9" stroke="#0a0a0a" stroke-width="3.7" stroke-linecap="round"/><path d="M-4.2 0H4.2" stroke="#0a0a0a" stroke-width="2.9" fill="none"/></g><g transform="translate(203.1 993)"><circle r="8.9" fill="none" stroke="#0a0a0a" stroke-width="3.3"/><path d="M6.9 6.9L12.9 12.9" stroke="#0a0a0a" stroke-width="3.7" stroke-linecap="round"/><path d="M-4.2 0H4.2M0 -4.2V4.2" stroke="#0a0a0a" stroke-width="2.9" fill="none"/></g><g transform="translate(260 995.1) rotate(-43.5)" fill="none" stroke="#0a0a0a"><rect x="-13.6" y="-4.7" width="27.2" height="9.4" stroke-width="2.4" rx="0.8"/><path d="M-9.5 -4.5v3.4M-6.3 -4.5v2.4M-3.1 -4.5v3.4M0.1 -4.5v2.4M3.3 -4.5v3.4M6.5 -4.5v2.4M9.7 -4.5v3.4" stroke-width="1.5"/></g><g fill="#111"><rect x="297.9" y="985.1" width="2.2" height="2.2"/><rect x="297.9" y="1002.4" width="2.2" height="2.2"/><rect x="302.09999999999997" y="985.1" width="2.2" height="2.2"/><rect x="302.09999999999997" y="1002.4" width="2.2" height="2.2"/><rect x="310.79999999999995" y="985.1" width="2.2" height="2.2"/><rect x="310.79999999999995" y="1002.4" width="2.2" height="2.2"/><rect x="315.0" y="985.1" width="2.2" height="2.2"/><rect x="315.0" y="1002.4" width="2.2" height="2.2"/><rect x="297.9" y="989.1999999999999" width="2.2" height="2.2"/><rect x="315.0" y="989.1999999999999" width="2.2" height="2.2"/><rect x="297.9" y="998.0" width="2.2" height="2.2"/><rect x="315.0" y="998.0" width="2.2" height="2.2"/></g><path d="M297.8 994.7H317.2M307.7 985V1004.6" stroke="#0a0a0a" stroke-width="2.6" fill="none"/><path d="M424.8 985.6L435.6 994.8H432.6V1003.9H427.3V998.2H422.4V1003.9H417.1V994.8H414.1Z" fill="#0a0a0a" stroke="#0a0a0a" stroke-width="0.8" stroke-linejoin="round"/><g fill="#0a0a0a"><path d="M1207.2 983.2L1194.6 991.6L1207.2 1000L1211.2 997.3A6.6 6.6 0 0 1 1210.2 985.2Z"/><path d="M1194.6 996.6L1207.2 1005.2L1219.8 996.8L1217.4 995.2L1207.2 1002L1197 995Z"/></g><circle cx="1213.6" cy="990.6" r="5.4" fill="#fcfcfc"/><path d="M1209.6 990.6H1219.4M1214.5 985.7V995.5" stroke="#0a0a0a" stroke-width="2.2" fill="none"/><path d="M1357.2 992.6L1369.6 981.4L1382 992.6" fill="none" stroke="#0a0a0a" stroke-width="2.4"/><path d="M1364.2 981.2v4.5" stroke="#0a0a0a" stroke-width="1.8"/><path d="M1360 991.8L1369.6 983.4L1379.2 991.8V996.6H1374.4V1003.6H1360Z" fill="#0a0a0a"/><path d="M1373.6 1002.6H1387.6M1380.6 995.6V1009.6" stroke="#fcfcfc" stroke-width="5.6" fill="none"/><path d="M1374.6 1002.6H1386.6M1380.6 996.6V1008.6" stroke="#0a0a0a" stroke-width="3" fill="none"/></svg>
<span class="t" style="left:324.40px;top:990.20px;font-size:13.23px;letter-spacing:-0.297px;color:#1a1a1a;">Размеры</span>
<span class="t" style="left:1228.80px;top:989.92px;font-size:13.8px;letter-spacing:0.090px;color:#1a1a1a;">Добавить этаж</span>
<span class="t" style="left:1393.30px;top:989.92px;font-size:13.8px;letter-spacing:0.062px;color:#1a1a1a;">Добавить крышу</span>
<div style="left:1519.8px;top:138.5px;width:400px;height:880px;background:#f0f0f0;"></div>
<div style="left:1524.6px;top:187.6px;width:391.5px;height:831px;background:#f8f8f8;"></div>
<div style="left:1653px;top:149px;width:121.3px;height:39px;background:#f1f1f1;border:1px solid #e6e6e6;border-bottom:none;border-radius:2px 2px 0 0;"></div>
<div style="left:1774.6px;top:149px;width:123px;height:39px;background:#f1f1f1;border:1px solid #e6e6e6;border-bottom:none;border-radius:2px 2px 0 0;"></div>
<div style="left:1524.6px;top:145.3px;width:127.2px;height:44px;background:#f8f8f8;border-radius:3px 3px 0 0;"></div>
<span class="t" style="left:1564.00px;top:160.13px;font-size:13.9px;letter-spacing:-0.165px;color:#1c1c1c;">Проект</span>
<span class="t" style="left:1692.00px;top:162.53px;font-size:13.9px;letter-spacing:-0.099px;color:#1c1c1c;">Этажи</span>
<span class="t" style="left:1807.90px;top:162.53px;font-size:13.9px;letter-spacing:-0.180px;color:#1c1c1c;">Свойства</span>
<div class="hdr" style="left:1528px;top:194.3px;width:386.3px;height:30.4px;"></div>
<span class="t" style="left:1544.20px;top:204.67px;font-size:12.8px;letter-spacing:-0.060px;color:#0c0c0c;font-weight:bold;font-family:'DejaVu Sans','Liberation Sans',sans-serif;">Технические объекты</span>
<div class="hdr" style="left:1528px;top:557.9px;width:386.3px;height:30.4px;"></div>
<span class="t" style="left:1544.20px;top:568.27px;font-size:12.8px;letter-spacing:0.052px;color:#0c0c0c;font-weight:bold;font-family:'DejaVu Sans','Liberation Sans',sans-serif;">Рисовать трубы</span>
<div class="hdr" style="left:1528px;top:710.3px;width:386.3px;height:30.4px;"></div>
<span class="t" style="left:1544.20px;top:720.67px;font-size:12.8px;letter-spacing:-0.051px;color:#0c0c0c;font-weight:bold;font-family:'DejaVu Sans','Liberation Sans',sans-serif;">Список объектов</span>
<span class="t" style="left:1798.70px;top:720.12px;font-size:13.8px;letter-spacing:-0.190px;color:#1c1c1c;">Вид списка</span>
<div class="btn" style="left:1537.6px;top:236px;width:115.6px;height:96.2px;"></div>
<span class="t" style="left:1564.40px;top:294.22px;font-size:13.8px;letter-spacing:0.076px;color:#1c1c1c;">Добавить</span>
<span class="t" style="left:1558.65px;top:310.52px;font-size:13.8px;letter-spacing:0.204px;color:#1c1c1c;">сантехнику</span>
<div class="btn" style="left:1663.8px;top:236px;width:115.6px;height:96.2px;"></div>
<span class="t" style="left:1687.09px;top:307.13px;font-size:13.2px;letter-spacing:0.000px;color:#1c1c1c;">Вывод ГВС</span>
<div class="btn" style="left:1789.6px;top:236px;width:115.6px;height:96.2px;"></div>
<span class="t" style="left:1812.26px;top:307.13px;font-size:13.2px;letter-spacing:0.000px;color:#1c1c1c;">Вывод ХВС</span>
<div class="btn" style="left:1537.6px;top:343.5px;width:115.6px;height:96.2px;"></div>
<span class="t" style="left:1561.97px;top:414.63px;font-size:13.2px;letter-spacing:-0.000px;color:#1c1c1c;">ГВС и ХВС</span>
<div class="btn" style="left:1663.8px;top:343.5px;width:115.6px;height:96.2px;"></div>
<span class="t" style="left:1701.20px;top:401.72px;font-size:13.8px;letter-spacing:-0.265px;color:#1c1c1c;">Вывод</span>
<span class="t" style="left:1681.30px;top:418.02px;font-size:13.8px;letter-spacing:-0.200px;color:#1c1c1c;">канализации</span>
<div class="btn" style="left:1789.6px;top:343.5px;width:115.6px;height:96.2px;"></div>
<span class="t" style="left:1806.60px;top:401.72px;font-size:13.8px;letter-spacing:-0.205px;color:#1c1c1c;">Канализация</span>
<span class="t" style="left:1828.53px;top:418.53px;font-size:13.2px;letter-spacing:-0.000px;color:#1c1c1c;">и ХВС</span>
<div class="btn" style="left:1537.6px;top:451px;width:115.6px;height:96.2px;"></div>
<span class="t" style="left:1554.40px;top:509.22px;font-size:13.8px;letter-spacing:-0.205px;color:#1c1c1c;">Канализация</span>
<span class="t" style="left:1577.16px;top:526.03px;font-size:13.2px;letter-spacing:-0.000px;color:#1c1c1c;">и ГВС</span>
<div class="btn" style="left:1663.8px;top:451px;width:115.6px;height:96.2px;"></div>
<span class="t" style="left:1680.60px;top:509.22px;font-size:13.8px;letter-spacing:-0.205px;color:#1c1c1c;">Канализация</span>
<span class="t" style="left:1688.17px;top:526.03px;font-size:13.2px;letter-spacing:-0.000px;color:#1c1c1c;">ХВС и ГВС</span>
<div class="btn" style="left:1789.6px;top:451px;width:115.6px;height:96.2px;"></div>
<span class="t" style="left:1813.45px;top:521.62px;font-size:13.8px;letter-spacing:0.111px;color:#1c1c1c;">Коллектор</span>
<div class="btn" style="left:1537.6px;top:599.4px;width:115.6px;height:96.2px;"></div>
<span class="t" style="left:1582.68px;top:670.93px;font-size:13.2px;letter-spacing:0.000px;color:#1c1c1c;">ГВС</span>
<div class="btn" style="left:1663.8px;top:599.4px;width:115.6px;height:96.2px;"></div>
<span class="t" style="left:1708.05px;top:670.93px;font-size:13.2px;letter-spacing:0.000px;color:#1c1c1c;">ХВС</span>
<div class="btn" style="left:1789.6px;top:599.4px;width:115.6px;height:96.2px;"></div>
<span class="t" style="left:1806.60px;top:670.42px;font-size:13.8px;letter-spacing:-0.205px;color:#1c1c1c;">Канализация</span>
<div style="left:1532.2px;top:746px;width:378.4px;height:265.2px;background:#ffffff;border:1px solid #8a8d93;"></div>
<div style="left:1887.2px;top:747px;width:22.4px;height:263.2px;background:#f0f0f0;"></div>
<div style="left:1897.4px;top:940.8px;width:2px;height:46.4px;background:#868686;"></div>
<span class="t" style="left:1584.80px;top:756.53px;font-size:14.38px;letter-spacing:-0.297px;color:#2a2a2a;">ХВС</span>
<span class="t" style="left:1584.50px;top:776.53px;font-size:13.2px;letter-spacing:0.008px;color:#4a4a4a;">Коммуникации</span>
<div style="left:1535px;top:797.7px;width:352px;height:1.1px;background:#e7e7e7;"></div>
<span class="t" style="left:1584.80px;top:806.53px;font-size:14.38px;letter-spacing:-0.297px;color:#2a2a2a;">ХВС</span>
<span class="t" style="left:1584.50px;top:826.53px;font-size:13.2px;letter-spacing:0.008px;color:#4a4a4a;">Коммуникации</span>
<div style="left:1535px;top:847.7px;width:352px;height:1.1px;background:#e7e7e7;"></div>
<span class="t" style="left:1584.80px;top:856.34px;font-size:14.6px;letter-spacing:-0.301px;color:#2a2a2a;">ГВС</span>
<span class="t" style="left:1584.50px;top:876.53px;font-size:13.2px;letter-spacing:0.008px;color:#4a4a4a;">Коммуникации</span>
<div style="left:1535px;top:897.7px;width:352px;height:1.1px;background:#e7e7e7;"></div>
<span class="t" style="left:1584.80px;top:905.83px;font-size:15.2px;letter-spacing:0.121px;color:#2a2a2a;">Канализация</span>
<span class="t" style="left:1584.50px;top:926.53px;font-size:13.2px;letter-spacing:0.008px;color:#4a4a4a;">Коммуникации</span>
<div style="left:1534.8px;top:949px;width:352.4px;height:48.4px;background:#0a7eff;"></div>
<span class="t" style="left:1585.00px;top:955.86px;font-size:15.4px;letter-spacing:0.054px;color:#d6ebff;">Вывод Канализации</span>
<span class="t" style="left:1585.00px;top:976.86px;font-size:13.4px;letter-spacing:0.190px;color:#d6ebff;">30.0 x 30.0</span>
<svg style="left:0;top:0" width="1919" height="1018" viewBox="0 0 1919 1018"><path d="M1576.9 636H1614.5" stroke="#e0121a" stroke-width="2.8"/><circle cx="1576.9" cy="636" r="4.8" fill="#e0121a"/><circle cx="1614.5" cy="636" r="4.8" fill="#e0121a"/><path d="M1703.1000000000001 636H1740.7" stroke="#1420d8" stroke-width="2.8"/><circle cx="1703.1000000000001" cy="636" r="4.8" fill="#1420d8"/><circle cx="1740.7" cy="636" r="4.8" fill="#1420d8"/><path d="M1829.1000000000001 636H1866.7" stroke="#2f9a34" stroke-width="2.8"/><circle cx="1829.1000000000001" cy="636" r="4.8" fill="#2f9a34"/><circle cx="1866.7" cy="636" r="4.8" fill="#2f9a34"/><path d="M1549.2 782.3L1570.6 760.6" stroke="#1a2ad0" stroke-width="2.1"/><circle cx="1549.2" cy="782.3" r="4" fill="#1a2ad0"/><circle cx="1570.6" cy="760.6" r="4" fill="#1a2ad0"/><path d="M1549.2 832.3L1570.6 810.6" stroke="#1a2ad0" stroke-width="2.1"/><circle cx="1549.2" cy="832.3" r="4" fill="#1a2ad0"/><circle cx="1570.6" cy="810.6" r="4" fill="#1a2ad0"/><path d="M1549.2 882.3L1570.6 860.6" stroke="#e0202a" stroke-width="2.1"/><circle cx="1549.2" cy="882.3" r="4" fill="#e0202a"/><circle cx="1570.6" cy="860.6" r="4" fill="#e0202a"/><path d="M1549.2 932.3L1570.6 910.6" stroke="#349a3a" stroke-width="2.1"/><circle cx="1549.2" cy="932.3" r="4" fill="#349a3a"/><circle cx="1570.6" cy="910.6" r="4" fill="#349a3a"/><g fill="#fdfdfd" stroke="#b4b4b4" stroke-width="1.25"><path d="M1604.6 254.6Q1613.6 262.6 1608.6 272.6Q1605.6 278.6 1599.6 278.2L1598 274.6Q1603.4 271.8 1603.6 266Z"/><path d="M1590.6 266.6Q1597.6 268 1597.6 273Q1591.8 275.6 1592.6 281Q1590.2 285.6 1584.6 284.6Q1579.6 282.8 1580 277Q1581.6 270.2 1590.6 266.6Z"/><circle cx="1584.4" cy="259.4" r="4.7"/><circle cx="1586.4" cy="253.2" r="3.6"/><circle cx="1600.4" cy="252.4" r="4.2"/><circle cx="1603.6" cy="260.2" r="4.6"/><circle cx="1593.2" cy="263.6" r="4.4"/><circle cx="1593.6" cy="255.8" r="4.9"/></g><circle cx="1729.3000000000002" cy="263.2" r="3.3" fill="#fdfdfd" stroke="#b4b4b4" stroke-width="1.2"/><circle cx="1721.0" cy="270.7" r="6" fill="#fdfdfd" stroke="#b4b4b4" stroke-width="1.2"/><path d="M1716.8000000000002 277.0H1725.3000000000002V287.6Q1725.3000000000002 289.6 1723.3000000000002 289.6H1718.8000000000002Q1716.8000000000002 289.6 1716.8000000000002 287.6Z" fill="#e8262c"/><circle cx="1717.4" cy="263.7" r="4.9" fill="#fffdf4" stroke="#cc3240" stroke-width="2.7"/><circle cx="1854.7" cy="263.2" r="3.3" fill="#fdfdfd" stroke="#b4b4b4" stroke-width="1.2"/><circle cx="1846.3999999999999" cy="270.7" r="6" fill="#fdfdfd" stroke="#b4b4b4" stroke-width="1.2"/><path d="M1842.2 277.0H1850.7V287.6Q1850.7 289.6 1848.7 289.6H1844.2Q1842.2 289.6 1842.2 287.6Z" fill="#3c4ce4"/><circle cx="1842.8" cy="263.7" r="4.9" fill="#f4f8ff" stroke="#3e4cd8" stroke-width="2.7"/><circle cx="1590.8000000000002" cy="367.6" r="3.3" fill="#fdfdfd" stroke="#b4b4b4" stroke-width="1.2"/><circle cx="1582.5" cy="375.1" r="6" fill="#fdfdfd" stroke="#b4b4b4" stroke-width="1.2"/><path d="M1578.3000000000002 381.40000000000003H1586.8000000000002V393.00000000000006Q1586.8000000000002 395.00000000000006 1584.8000000000002 395.00000000000006H1580.3000000000002Q1578.3000000000002 395.00000000000006 1578.3000000000002 393.00000000000006Z" fill="#e8262c"/><circle cx="1578.9" cy="368.1" r="4.9" fill="#fffdf4" stroke="#cc3240" stroke-width="2.7"/><circle cx="1616.3000000000002" cy="373.7" r="3.3" fill="#fdfdfd" stroke="#b4b4b4" stroke-width="1.2"/><circle cx="1608.0" cy="381.2" r="6" fill="#fdfdfd" stroke="#b4b4b4" stroke-width="1.2"/><path d="M1603.8000000000002 387.5H1612.3000000000002V399.7Q1612.3000000000002 401.7 1610.3000000000002 401.7H1605.8000000000002Q1603.8000000000002 401.7 1603.8000000000002 399.7Z" fill="#3c4ce4"/><circle cx="1604.4" cy="374.2" r="4.9" fill="#f4f8ff" stroke="#3e4cd8" stroke-width="2.7"/><path d="M1718 360.3Q1735.5 361.3 1735.5 382.7L1717.5 382.7L1719 378.7Z" fill="#fdfdfd" stroke="#b4b4b4" stroke-width="1.2" stroke-linejoin="round"/><path d="M1717.4 382.2V386.2A9.1 4.6 0 0 0 1735.6 386.2V382.2" fill="#fdfdfd" stroke="#b4b4b4" stroke-width="1.2"/><path d="M1717.4 382.2A9.1 4.4 0 0 0 1735.6 382.2" fill="none" stroke="#b4b4b4" stroke-width="1.1"/><ellipse cx="1716" cy="369.7" rx="7.8" ry="9" fill="#fefefe" stroke="#050505" stroke-width="3"/><circle cx="1863.4" cy="362.9" r="3.3" fill="#fdfdfd" stroke="#b4b4b4" stroke-width="1.2"/><circle cx="1855.1" cy="370.4" r="6" fill="#fdfdfd" stroke="#b4b4b4" stroke-width="1.2"/><path d="M1850.9 376.7H1859.4V388.3Q1859.4 390.3 1857.4 390.3H1852.9Q1850.9 390.3 1850.9 388.3Z" fill="#3c4ce4"/><circle cx="1851.5" cy="363.4" r="4.9" fill="#f4f8ff" stroke="#3e4cd8" stroke-width="2.7"/><path d="M1838.6 390.6V393.4A9 4.4 0 0 0 1856.4 393.4V390.2" fill="#fdfdfd" stroke="#b4b4b4" stroke-width="1.2"/><ellipse cx="1837.2" cy="374.1" rx="7.6" ry="9.2" fill="#fefefe" stroke="#050505" stroke-width="3"/><rect x="1583.4" y="478" width="5.4" height="16.6" fill="#d84848"/><circle cx="1595.8000000000002" cy="467.0" r="3.3" fill="#fdfdfd" stroke="#b4b4b4" stroke-width="1.2"/><circle cx="1587.5" cy="474.5" r="6" fill="#fdfdfd" stroke="#b4b4b4" stroke-width="1.2"/><path d="M1583.3000000000002 480.8H1591.8000000000002V478.8Q1591.8000000000002 480.8 1589.8000000000002 480.8H1585.3000000000002Q1583.3000000000002 480.8 1583.3000000000002 478.8Z" fill="none"/><circle cx="1583.9" cy="467.5" r="4.9" fill="#fffdf4" stroke="#cc3240" stroke-width="2.7"/><path d="M1596.3 474.5Q1613.8 475.5 1613.8 497.5L1595.8 497.5L1597.3 494.1Z" fill="#fdfdfd" stroke="#b4b4b4" stroke-width="1.2" stroke-linejoin="round"/><path d="M1595.7 497.0V501.0A9.1 4.6 0 0 0 1613.8999999999999 501.0V497.0" fill="#fdfdfd" stroke="#b4b4b4" stroke-width="1.2"/><path d="M1595.7 497.0A9.1 4.4 0 0 0 1613.8999999999999 497.0" fill="none" stroke="#b4b4b4" stroke-width="1.1"/><ellipse cx="1594.3" cy="484.5" rx="7.8" ry="9.6" fill="#fefefe" stroke="#050505" stroke-width="3"/><rect x="1704" y="478" width="5.4" height="16.6" fill="#d84848"/><circle cx="1716.3000000000002" cy="467.0" r="3.3" fill="#fdfdfd" stroke="#b4b4b4" stroke-width="1.2"/><circle cx="1708.0" cy="474.5" r="6" fill="#fdfdfd" stroke="#b4b4b4" stroke-width="1.2"/><path d="M1703.8000000000002 480.8H1712.3000000000002V478.8Q1712.3000000000002 480.8 1710.3000000000002 480.8H1705.8000000000002Q1703.8000000000002 480.8 1703.8000000000002 478.8Z" fill="none"/><circle cx="1704.4" cy="467.5" r="4.9" fill="#fffdf4" stroke="#cc3240" stroke-width="2.7"/><circle cx="1742.3000000000002" cy="472.3" r="3.3" fill="#fdfdfd" stroke="#b4b4b4" stroke-width="1.2"/><circle cx="1734.0" cy="479.8" r="6" fill="#fdfdfd" stroke="#b4b4b4" stroke-width="1.2"/><path d="M1729.8000000000002 486.1H1738.3000000000002V497.5Q1738.3000000000002 499.5 1736.3000000000002 499.5H1731.8000000000002Q1729.8000000000002 499.5 1729.8000000000002 497.5Z" fill="#3c4ce4"/><circle cx="1730.4" cy="472.8" r="4.9" fill="#f4f8ff" stroke="#3e4cd8" stroke-width="2.7"/><path d="M1716.6 497V501.4A9 4.4 0 0 0 1734.4 501.4V499.8" fill="#fdfdfd" stroke="#b4b4b4" stroke-width="1.2"/><ellipse cx="1715.4" cy="484.5" rx="7.8" ry="9.6" fill="#fefefe" stroke="#050505" stroke-width="3"/><g fill="#d4f4cc" stroke="#2f7d2f" stroke-width="1.2" stroke-linejoin="round"><path d="M1826.6 486.4L1832 483.6L1866 493.2L1870.6 491.4L1871.4 498L1859 501.2L1827.4 492.6Z"/><path d="M1830.1 477.1V484.1A4.4 2.2 0 0 0 1838.9 484.1V477.1" /><ellipse cx="1834.5" cy="480.5" rx="4.4" ry="2.2"/><ellipse cx="1834.5" cy="477.1" rx="4.4" ry="2.2"/><path d="M1839.3 479.7V486.7A4.4 2.2 0 0 0 1848.1000000000001 486.7V479.7" /><ellipse cx="1843.7" cy="483.09999999999997" rx="4.4" ry="2.2"/><ellipse cx="1843.7" cy="479.7" rx="4.4" ry="2.2"/><path d="M1848.0 482.2V489.2A4.4 2.2 0 0 0 1856.8000000000002 489.2V482.2" /><ellipse cx="1852.4" cy="485.59999999999997" rx="4.4" ry="2.2"/><ellipse cx="1852.4" cy="482.2" rx="4.4" ry="2.2"/><path d="M1856.6999999999998 484.8V491.8A4.4 2.2 0 0 0 1865.5 491.8V484.8" /><ellipse cx="1861.1" cy="488.2" rx="4.4" ry="2.2"/><ellipse cx="1861.1" cy="484.8" rx="4.4" ry="2.2"/><ellipse cx="1829.9" cy="489.4" rx="2.9" ry="3.9" transform="rotate(-14 1829.9 489.4)"/><ellipse cx="1839.1" cy="491.9" rx="2.9" ry="3.9" transform="rotate(-14 1839.1 491.9)"/><ellipse cx="1847.3" cy="494.5" rx="2.9" ry="3.9" transform="rotate(-14 1847.3 494.5)"/><ellipse cx="1855.5" cy="497" rx="2.9" ry="3.9" transform="rotate(-14 1855.5 497)"/><ellipse cx="1868.4" cy="496" rx="2.7" ry="4"/><path d="M1862 492.8V500.4"/></g><rect x="1879.3" y="715.7" width="18.2" height="18.2" fill="#fbfbfb" stroke="#9c9c9c" stroke-width="1.1"/><path d="M1880 734.4H1898M1898 716.4V734.4" stroke="#8a8a8a" stroke-width="1"/><path d="M1883.4 720.4V729.8H1886M1883.4 724.7H1886" fill="none" stroke="#4a78b8" stroke-width="1"/><rect x="1881.6" y="718" width="3.8" height="2.6" rx="1" fill="#eaf2fc" stroke="#4a78b8" stroke-width="0.9"/><rect x="1885.6" y="723.4" width="3.8" height="2.6" rx="1" fill="#eaf2fc" stroke="#4a78b8" stroke-width="0.9"/><rect x="1885.6" y="728.5" width="3.8" height="2.6" rx="1" fill="#eaf2fc" stroke="#4a78b8" stroke-width="0.9"/><path d="M1887.6 719.3H1894.6M1891.2 724.7H1895.6M1891.2 729.8H1895.6" stroke="#8d8d8d" stroke-width="1"/><path d="M1555 957.4Q1570 957.6 1570 971V979.6A7.8 4.4 0 0 1 1554.6 979.6V973Z" fill="#fbfbfb"/><path d="M1555.4 976.4Q1562.4 980.6 1569.6 976.4" fill="none" stroke="#f0c4cc" stroke-width="0.9"/><ellipse cx="1554.4" cy="966.8" rx="6.2" ry="7.5" fill="#ffffff" stroke="#050505" stroke-width="2.4"/><path d="M1857.2 973.2Q1867 962.6 1876.8 973.2Q1867 983.2 1857.2 973.2Z" fill="#f4f6ee"/><circle cx="1867.2" cy="972.8" r="4" fill="#748f22"/><circle cx="1867.2" cy="972.6" r="1.8" fill="#2a3410"/><circle cx="1865.8" cy="971.2" r="0.9" fill="#e8f0c8"/></svg>
</div>
</body></html>
